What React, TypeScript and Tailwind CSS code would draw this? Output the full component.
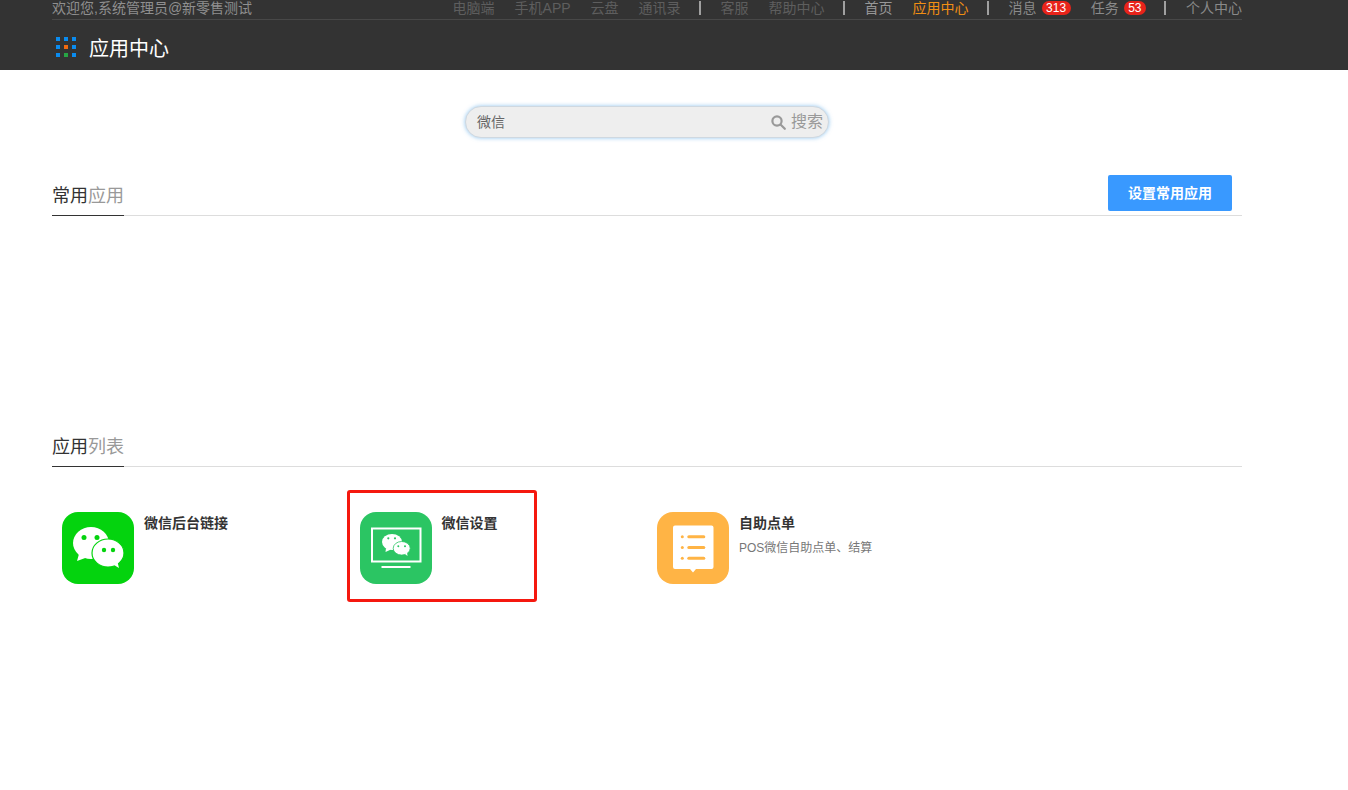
const fontStack = '"Liberation Sans", "Noto Sans CJK SC", sans-serif'

const downloads = ["电脑端", "手机APP", "云盘", "通讯录"]

function Divider() {
  return <span className="ml-[18px] mr-[20px] block h-[14px] w-[2px] bg-[#a0a0a0]" />
}

function Badge({ count }: { count: string }) {
  return (
    <span className="ml-[5px] flex h-[14px] items-center rounded-[7px] bg-[#e8231a] px-[4.5px] text-[12px] leading-none text-white">
      {count}
    </span>
  )
}

function GridLogo() {
  const colors = ["#0a8cf0", "#0a8cf0", "#0a8cf0", "#0a8cf0", "#f26a0f", "#0a8cf0", "#0a8cf0", "#27a544", "#0a8cf0"]
  return (
    <div className="grid w-[20px] grid-cols-3 gap-[4px]">
      {colors.map((c, i) => (
        <span key={i} className="h-[4px] w-[4px]" style={{ backgroundColor: c }} />
      ))}
    </div>
  )
}

function Header() {
  return (
    <div className="h-[70px] bg-[#333333]">
      <div className="ml-[52px] w-[1190px]">
        <div className="flex h-[20px] items-center justify-between border-b border-[#484848] pb-[4px] text-[14px] leading-[16px]">
          <span className="text-[#8f8f8f]">欢迎您,系统管理员@新零售测试</span>
          <div className="flex items-center">
            <div className="flex gap-[20px] text-[#5e5e5e]">
              {downloads.map((d) => (
                <span key={d}>{d}</span>
              ))}
            </div>
            <Divider />
            <div className="flex gap-[20px] text-[#5e5e5e]">
              <span>客服</span>
              <span>帮助中心</span>
            </div>
            <Divider />
            <span className="text-[#979797]">首页</span>
            <span className="ml-[20px] text-[#f18f13]">应用中心</span>
            <Divider />
            <span className="text-[#8a8a8a]">消息</span>
            <Badge count="313" />
            <span className="ml-[20px] text-[#8a8a8a]">任务</span>
            <Badge count="53" />
            <Divider />
            <span className="text-[#8a8a8a]">个人中心</span>
          </div>
        </div>
        <div className="flex h-[50px] items-center pl-[4px] pt-[4px]">
          <GridLogo />
          <span className="ml-[13px] mt-[3px] text-[20px] leading-none text-white">应用中心</span>
        </div>
      </div>
    </div>
  )
}

function SearchBar() {
  return (
    <div className="mx-auto flex h-[32px] w-[364px] items-center justify-between rounded-[16px] border border-[#cfd8e0] bg-[#eeeeee] pl-[11px] pr-[5px] shadow-[0_0_4px_rgba(102,175,233,0.7)]">
      <span className="text-[14px] text-[#666666]">微信</span>
      <div className="flex items-center gap-[5px] text-[#999999]">
        <svg width="15" height="15" viewBox="0 0 15 15" fill="none" stroke="#999999" strokeWidth="2.2">
          <circle cx="6" cy="6" r="4.6" />
          <path d="M9.5 9.500 L13.800 13.800" strokeLinecap="round" />
        </svg>
        <span className="text-[16px] leading-none">搜索</span>
      </div>
    </div>
  )
}

function SectionTitle({ dark, light }: { dark: string; light: string }) {
  return (
    <div className="-mb-px inline-block border-b border-[#333333] pb-[5px] text-[18px] leading-[28px]">
      <span className="text-[#333333]">{dark}</span>
      <span className="text-[#999999]">{light}</span>
    </div>
  )
}

function WechatBubbles() {
  return (
    <svg width="72" height="72" viewBox="0 0 72 72">
      <ellipse cx="29" cy="31" rx="18" ry="16" fill="#fff" />
      <path d="M17 42 L15 49 L26 45 Z" fill="#fff" />
      <circle cx="22" cy="25.500" r="2.500" fill="#04d30e" />
      <circle cx="35" cy="25.500" r="2.500" fill="#04d30e" />
      <ellipse cx="46" cy="41" rx="16" ry="14" fill="#fff" stroke="#04d30e" strokeWidth="1.200" />
      <path d="M52 53 L57 56 L55.500 50 Z" fill="#fff" />
      <circle cx="42" cy="38" r="2.200" fill="#04d30e" />
      <circle cx="51" cy="38" r="2.200" fill="#04d30e" />
    </svg>
  )
}

function WechatSettingsIcon() {
  return (
    <svg width="72" height="72" viewBox="0 0 72 72">
      <rect x="12" y="16.500" width="48.500" height="33" fill="none" stroke="#fff" strokeWidth="2" />
      <rect x="21.500" y="54" width="29" height="2" fill="#fff" />
      <ellipse cx="32" cy="30" rx="10" ry="8" fill="#fff" />
      <path d="M26 36 L25.500 40 L31 37.500 Z" fill="#fff" />
      <ellipse cx="41.700" cy="36.300" rx="8.500" ry="6.800" fill="#fff" stroke="#2bc563" strokeWidth="0.800" />
      <path d="M45 42 L47.500 44 L47 40 Z" fill="#fff" />
      <circle cx="28.300" cy="26.300" r="1.100" fill="#2bc563" />
      <circle cx="35" cy="26.300" r="1.100" fill="#2bc563" />
      <circle cx="38.300" cy="34.300" r="1" fill="#2bc563" />
      <circle cx="45" cy="34.300" r="1" fill="#2bc563" />
    </svg>
  )
}

function OrderIcon() {
  return (
    <svg width="72" height="72" viewBox="0 0 72 72">
      <path d="M18 13.500h36.500a2 2 0 0 1 2 2V55a2 2 0 0 1-2 2H39l-3 3.500-3-3.500H18a2 2 0 0 1-2-2V15.500a2 2 0 0 1 2-2z" fill="#fff" />
      <g fill="#ffb445">
        <circle cx="25.300" cy="24.700" r="1.500" />
        <circle cx="25.300" cy="35.500" r="1.500" />
        <circle cx="25.300" cy="46.300" r="1.500" />
        <rect x="30.300" y="23.200" width="18" height="3" rx="1.500" />
        <rect x="30.300" y="34" width="18" height="3" rx="1.500" />
        <rect x="30.300" y="44.800" width="18" height="3" rx="1.500" />
      </g>
    </svg>
  )
}

function AppItem({ icon, iconBg, name, desc }: { icon: React.ReactNode; iconBg: string; name: string; desc?: string }) {
  return (
    <div className="flex pl-[10px]">
      <div className={`h-[72px] w-[72px] overflow-hidden rounded-[16px] ${iconBg}`}>{icon}</div>
      <div className="ml-[10px]">
        <div className="mt-[2px] text-[14px] font-bold leading-[18px] text-[#333333]">{name}</div>
        {desc && <div className="mt-[7px] text-[12px] leading-[18px] text-[#777777]">{desc}</div>}
      </div>
    </div>
  )
}

export default function App() {
  return (
    <div className="min-h-[790px] bg-white" style={{ fontFamily: fontStack }}>
      <Header />
      <div className="ml-[52px] w-[1190px]">
        <div className="pt-[36px]">
          <SearchBar />
        </div>

        <div className="mt-[37px] flex h-[41px] items-end justify-between border-b border-[#dddddd]">
          <SectionTitle dark="常用" light="应用" />
          <button className="mr-[10px] mb-[4px] h-[36px] w-[124px] rounded-[2px] bg-[#3999ff] text-[14px] font-bold text-white">
            设置常用应用
          </button>
        </div>

        <div className="mt-[218px] flex h-[33px] items-end border-b border-[#dddddd]">
          <SectionTitle dark="应用" light="列表" />
        </div>

        <div className="relative mt-[45px] grid grid-cols-4">
          <AppItem icon={<WechatBubbles />} iconBg="bg-[#04d30e]" name="微信后台链接" />
          <AppItem icon={<WechatSettingsIcon />} iconBg="bg-[#2bc563]" name="微信设置" />
          <AppItem icon={<OrderIcon />} iconBg="bg-[#ffb445]" name="自助点单" desc="POS微信自助点单、结算" />
          <div className="absolute left-[295px] top-[-22px] h-[112px] w-[190px] rounded-[3px] border-[3px] border-[#f5180f]" />
        </div>
      </div>
    </div>
  )
}
